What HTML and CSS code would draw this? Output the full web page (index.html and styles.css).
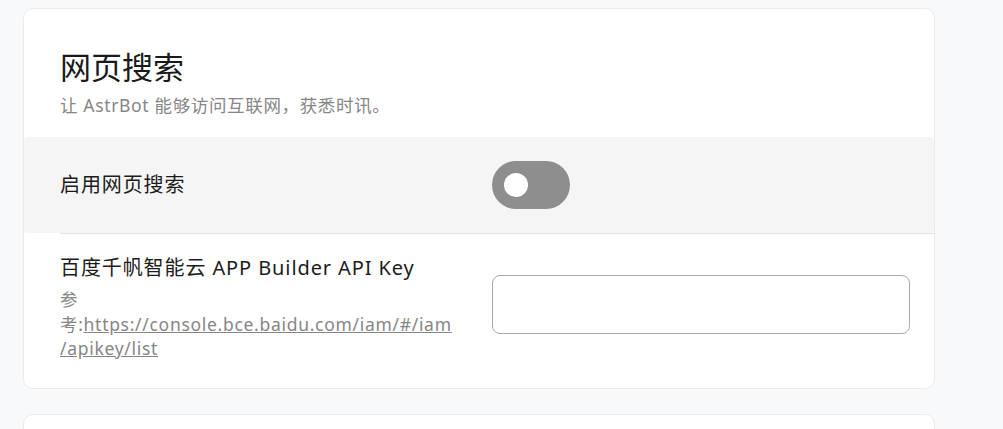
FILE: index.html
```html
<!DOCTYPE html>
<html lang="zh-CN">
<head>
<meta charset="utf-8">
<title>网页搜索</title>
<link rel="stylesheet" href="styles.css">
</head>
<body>
<div class="page">
  <section class="card">
    <header class="card-head">
      <h2 class="card-title">网页搜索</h2>
      <p class="card-sub">让 AstrBot 能够访问互联网，获悉时讯。</p>
    </header>
    <div class="setting setting-active">
      <div class="setting-inner">
        <div class="setting-label">
          <div class="label">启用网页搜索</div>
        </div>
        <div class="setting-control">
          <span class="switch"><span class="knob"></span></span>
        </div>
      </div>
    </div>
    <div class="setting">
      <div class="setting-inner setting-inner-tall">
        <div class="setting-label">
          <div class="label">百度千帆智能云 APP Builder API Key</div>
          <div class="hint">参考:<a class="hint-link" href="#">https://console.bce.baidu.com/iam/#/iam/apikey/list</a></div>
        </div>
        <div class="setting-control">
          <input class="text-input" type="text">
        </div>
      </div>
    </div>
  </section>
  <section class="card card-next"></section>
</div>
</body>
</html>
```

FILE: styles.css
```css
* { box-sizing: border-box; }

html, body {
  margin: 0;
  padding: 0;
  background: #f8f9fa;
  font-family: "Noto Sans", "Noto Sans CJK SC", sans-serif;
  overflow: hidden;
}

.page {
  padding: 8px 68px 0 23px;
}

.card {
  background: #ffffff;
  border: 1px solid #ebebeb;
  border-radius: 10px;
}

.card-head {
  padding: 39px 36px 20px 36px;
}

.card-title {
  margin: 0;
  font-size: 31px;
  line-height: 38px;
  font-weight: 400;
  color: #1a1a1a;
}

.card-sub {
  margin: 7px 0 0 0;
  font-size: 17.5px;
  line-height: 24px;
  letter-spacing: 0.65px;
  color: #868686;
}

.setting {
  padding-left: 36px;
  border-radius: 4px;
}

.setting-active {
  background: #f5f5f5;
}

.setting + .setting .setting-inner {
  border-top: 1px solid #e2e2e2;
}

.setting-inner {
  display: grid;
  grid-template-columns: 396px 418px;
  column-gap: 36px;
  align-items: center;
  padding-right: 24px;
  min-height: 96px;
}

.setting-inner-tall {
  padding-top: 20px;
  padding-bottom: 27px;
}

.label {
  font-size: 20px;
  line-height: 28px;
  letter-spacing: 0.9px;
  color: #1c1c1c;
}

.hint {
  margin-top: 5px;
  font-size: 17.5px;
  line-height: 24.5px;
  letter-spacing: 0.7px;
  color: #868686;
  overflow-wrap: break-word;
}

.hint-link {
  color: #868686;
  text-decoration: underline;
}

.switch {
  display: flex;
  align-items: center;
  width: 78px;
  height: 48px;
  border-radius: 24px;
  background: #8e8e8e;
}

.knob {
  width: 24px;
  height: 24px;
  margin-left: 12px;
  border-radius: 50%;
  background: #ffffff;
}

.text-input {
  display: block;
  width: 100%;
  height: 59px;
  margin-bottom: 6px;
  border: 1px solid #aaaaaa;
  border-radius: 8px;
  background: #ffffff;
  font: inherit;
  outline: none;
}

.card-next {
  margin-top: 25px;
  height: 120px;
}
```
